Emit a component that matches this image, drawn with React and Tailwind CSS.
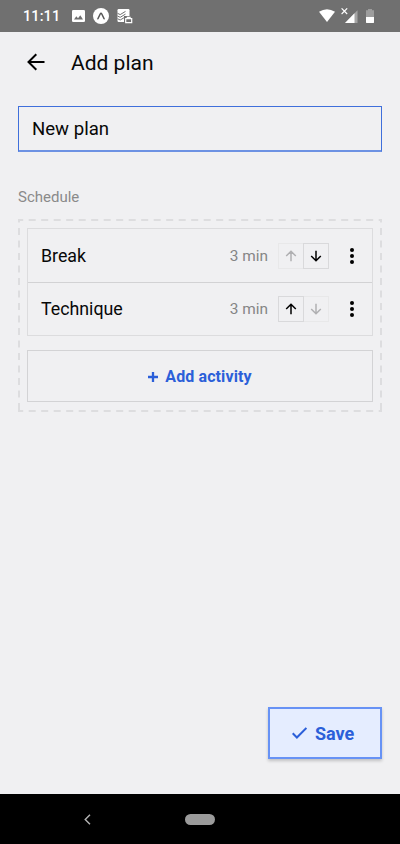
function StatusBar() {
  return (
    <header className="flex h-8 shrink-0 items-center bg-[#707070] pr-[26px] pl-[23px] text-white">
      <span className="w-[49px] pt-px text-[14.5px] leading-8 font-medium tracking-[0.1px]">11:11</span>
      <svg className="h-3 w-[13px]" viewBox="0 0 13 12">
        <rect width="13" height="12" rx="1.3" fill="#fff" />
        <path d="M2 9.5 4.3 6.3 6 8.2 8.3 5.3 11 9.5Z" fill="#707070" />
      </svg>
      <svg className="ml-2 h-4 w-4" viewBox="0 0 16 16">
        <circle cx="8" cy="8" r="8" fill="#fff" />
        <path d="M4.9 10.8 7.2 6Q8 4.6 8.8 6L11.1 10.8" fill="none" stroke="#555" strokeWidth="1.5" strokeLinecap="round" />
      </svg>
      <svg className="ml-2 h-[15px] w-4" viewBox="0 0 16 15">
        <rect x="0.5" width="12" height="13" rx="1.2" fill="#fff" />
        <path d="M.5 4.3 3.2 5.6 8.5 2.4M.5 7 3.2 8.3 8.5 5.1M.5 9.7 3.2 11 8.5 7.8" fill="none" stroke="#707070" />
        <path d="M7 7h8v8H7z" fill="#707070" />
        <path d="M8.7 9.7h6v4h-6zM10.3 9.5V8.3h2.8v1.2" fill="none" stroke="#fff" strokeWidth="1.2" />
      </svg>
      <svg className="ml-auto h-[14px] w-4" viewBox="0 0 16 14">
        <path d="M0 2.7Q8-2.4 16 2.7L8 13Z" fill="#fff" />
      </svg>
      <svg className="ml-[6px] h-4 w-[17px]" viewBox="0 0 17 16">
        <path d="M.6.3 6.2 6M6.2.3.6 6" stroke="#fff" strokeWidth="1.1" />
        <path d="M4 15 16.5 2.2V15Z" fill="#a5a5a5" />
        <path d="M4 15 13.5 5.2V15Z" fill="#fff" />
      </svg>
      <svg className="ml-2 h-[14px] w-2" viewBox="0 0 8 14">
        <path d="M2 0h4v1.3h2V14H0V1.3h2Z" fill="#9d9d9d" />
        <path d="M0 8h8v5.3q0 .7-.7.7H.7Q0 14 0 13.3Z" fill="#fff" />
      </svg>
    </header>
  );
}

function Arrow({ up, disabled }) {
  return (
    <button
      disabled={disabled}
      className={`flex h-[26px] items-center justify-center border ${up ? "w-[26px]" : "-ml-px w-[26px]"} ${
        disabled ? "border-[#e8e8e9] text-[#b0b0b2]" : "relative border-[#d9d9db] text-black"
      }`}
    >
      <svg className={`h-3 w-3 ${up ? "" : "rotate-180"}`} viewBox="0 0 12 12">
        <path d="M6 11.2V1.3M1.2 6 6 1.2 10.8 6" fill="none" stroke="currentColor" strokeWidth="1.5" />
      </svg>
    </button>
  );
}

function Activity({ name, first, last }) {
  return (
    <li className={`flex h-[53px] items-center pl-[13px] ${first ? "" : "border-t border-[#d2d2d4]"}`}>
      <span className="text-[17.8px] leading-6">{name}</span>
      <span className="ml-auto text-[15.4px] leading-6 text-[#858585]">3 min</span>
      <div className="ml-[10px] flex">
        <Arrow up disabled={first} />
        <Arrow disabled={last} />
      </div>
      <svg className="mr-[18px] ml-[21px] h-4 w-1" viewBox="0 0 4 16">
        <circle cx="2" cy="2" r="2" />
        <circle cx="2" cy="8" r="2" />
        <circle cx="2" cy="14" r="2" />
      </svg>
    </li>
  );
}

export default function App() {
  return (
    <div className="flex h-[844px] w-[400px] flex-col overflow-hidden bg-[#f0f0f2] font-[Roboto,sans-serif] text-[#080808]">
      <StatusBar />
      <main className="flex flex-1 flex-col px-[18px]">
        <div className="flex h-[60px] items-center pl-[9px]">
          <svg className="h-[18px] w-[18px]" viewBox="0 0 18 18">
            <path d="M17.5 9H1.8M9.3 1.2 1.5 9l7.8 7.8" fill="none" stroke="#000" strokeWidth="2" />
          </svg>
          <h1 className="ml-[26px] pt-0.5 text-[21px] leading-8">Add plan</h1>
        </div>
        <div className="mt-[14px] flex h-[46px] items-center border border-b-2 border-[#3f6fdb] border-b-[#6d92e3] pt-[3px] pl-[13px] text-[18.6px]">
          New plan
        </div>
        <h2 className="mt-[35px] text-[15px] leading-5 text-[#8a8a8a]">Schedule</h2>
        <section className="relative mt-3 h-[193px] px-[9px] pt-[9px]">
          <svg className="pointer-events-none absolute inset-0 h-[193px] w-[364px]" viewBox="0 0 364 193">
            <g fill="none" stroke="#dddddf" strokeWidth="2" strokeDasharray="7 5.5">
              <path d="M0 1H364" strokeDashoffset="1.8" />
              <path d="M0 192H364" strokeDashoffset="1.8" />
              <path d="M1 0V193" strokeDashoffset="3.5" />
              <path d="M363 0V193" strokeDashoffset="3.5" />
            </g>
          </svg>
          <ul className="border border-[#dcdcde]">
            <Activity name="Break" first />
            <Activity name="Technique" last />
          </ul>
          <button className="mt-[14px] flex h-[52px] w-full items-center justify-center border border-[#d3d3d5] text-[16px] font-bold text-[#2b5fd9]">
            <svg className="mt-0.5 mr-[7px] h-[10px] w-[10px]" viewBox="0 0 10 10">
              <path d="M5 0v10M0 5h10" stroke="currentColor" strokeWidth="2.3" />
            </svg>
            <span className="pt-0.5 tracking-[0.1px]">Add activity</span>
          </button>
        </section>
        <button className="mt-auto mb-[35px] flex h-[52px] w-[114px] items-center self-end border-2 border-[#6792f5] bg-[#e5edff] pl-[22px] text-[18px] font-bold text-[#2b5fd9] shadow-[0_2px_3px_rgba(0,0,0,0.2)]">
          <svg className="mr-2 h-3 w-[15px]" viewBox="0 0 15 12">
            <path d="m.7 6.3 4.2 4.2L14.4 1" fill="none" stroke="currentColor" strokeWidth="2" />
          </svg>
          Save
        </button>
      </main>
      <nav className="flex h-[50px] shrink-0 items-center bg-black pl-[84px]">
        <svg className="h-[11px] w-[7px]" viewBox="0 0 7 11">
          <path d="M6 .7 1.2 5.5 6 10.3" fill="none" stroke="#b5b5b5" strokeWidth="1.4" />
        </svg>
        <div className="ml-[94px] h-[11px] w-[30px] rounded-full bg-[#9b9b9b]" />
      </nav>
    </div>
  );
}
